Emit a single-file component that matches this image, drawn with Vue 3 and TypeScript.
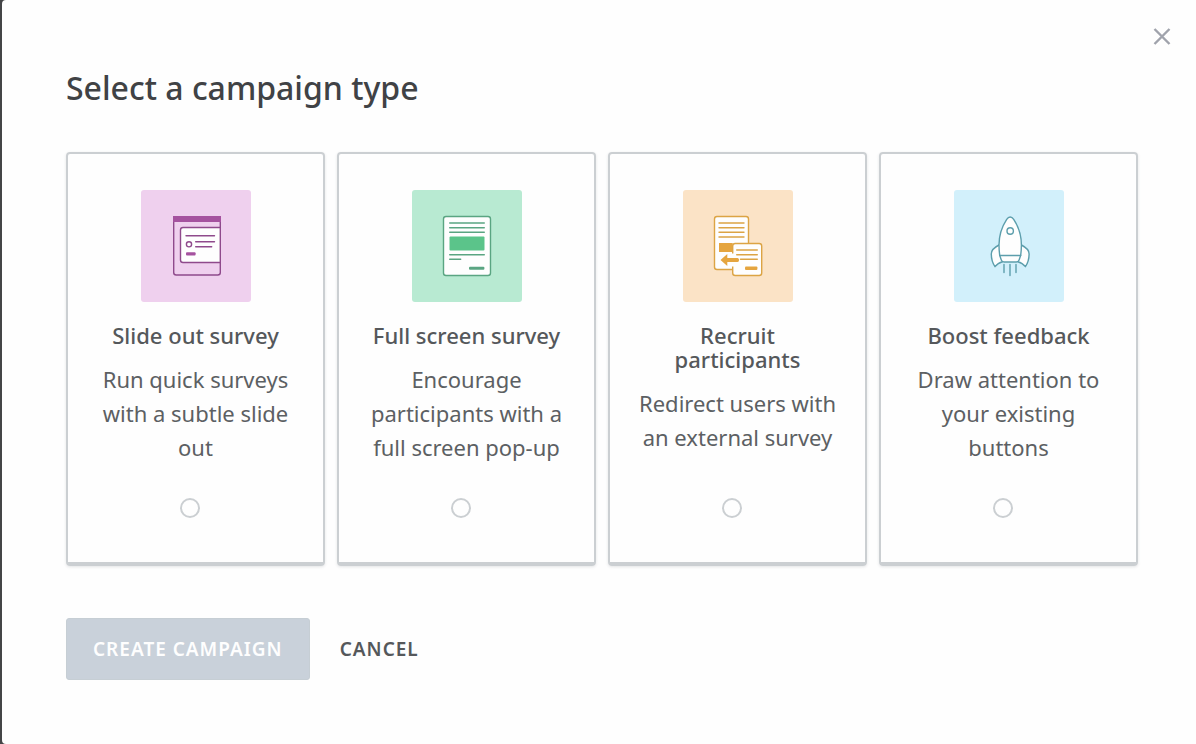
<script setup lang="ts">
import { ref } from 'vue'

interface Campaign {
  id: string
  title: string
  text: string
}

const campaigns: Campaign[] = [
  { id: 'slide', title: 'Slide out survey', text: 'Run quick surveys with a subtle slide out' },
  { id: 'full', title: 'Full screen survey', text: 'Encourage participants with a full screen pop-up' },
  { id: 'recruit', title: 'Recruit participants', text: 'Redirect users with an external survey' },
  { id: 'boost', title: 'Boost feedback', text: 'Draw attention to your existing buttons' },
]

const selected = ref('')
</script>

<template>
  <div class="backdrop">
    <main class="modal">
      <button class="close" type="button" aria-label="Close">
        <svg width="18" height="18" viewBox="0 0 18 18"><path d="M1.5 1l15 15M16.5 1l-15 15" /></svg>
      </button>
      <h1>Select a campaign type</h1>
      <form @submit.prevent>
        <div class="cards">
          <label v-for="c in campaigns" :key="c.id" class="card" :for="c.id">
            <span class="tile" :class="c.id">
              <svg v-if="c.id === 'slide'" viewBox="0 0 110 112">
                <path class="line" d="M32.7 30v52.5a2.5 2.5 0 0 0 2.5 2.5h41.6a2.5 2.5 0 0 0 2.5-2.5V30" />
                <path class="solid" d="M32 26h48v6H32z" />
                <path class="paper" d="M79.3 37.5H42a2.5 2.5 0 0 0-2.5 2.5v30a2.5 2.5 0 0 0 2.5 2.5h37.3z" />
                <path class="line" d="M45 45.7h28.5M54.7 51.8h18.8M54.7 56.7h16" />
                <circle class="line" cx="48" cy="54.3" r="2.6" />
                <rect class="solid" x="45" y="62.3" width="9.6" height="3.2" rx="1" />
              </svg>
              <svg v-else-if="c.id === 'full'" viewBox="0 0 110 112">
                <rect class="paper" x="31.5" y="26.5" width="47" height="59" rx="2.5" />
                <path class="line" d="M37.7 33h34.6M37.7 37.7h34.6M37.7 42.3h34.6M37.7 64.7h34.6M37.7 69.3h11" />
                <rect class="solid" x="37.5" y="46.5" width="35" height="14" rx="1" />
                <rect class="solid dark" x="57" y="76.7" width="15.4" height="3" rx="1" />
              </svg>
              <svg v-else-if="c.id === 'recruit'" viewBox="0 0 110 112">
                <rect class="paper" x="31.5" y="26.5" width="34" height="53" rx="2.5" />
                <path class="line" d="M36 33h25M36 37.7h25M36 42.3h25M36 47h25" />
                <path class="solid" d="M36 53h13.7v9H36z" />
                <rect class="paper" x="49.7" y="53.5" width="29" height="32" rx="2.5" />
                <path class="line" d="M53.7 60h20.6M53.7 64.7h20.6M57.5 69.3h16.8" />
                <path class="gap" d="M48 63.5h3.4v13H48z" />
                <path class="solid" d="M37.5 70l6.8-6v3.9h10.2c2 0 2 4 0 4H44.3V76z" />
                <rect class="solid" x="62" y="76.5" width="12.4" height="3.4" rx="1" />
              </svg>
              <svg v-else viewBox="0 0 110 112">
                <path class="paper" d="M45 55c-4 2-7.7 5-7.7 9 0 5 1.2 9 3.7 12.7 2-2.7 4.5-4.3 7.5-5M67.4 55c4 2 7.7 5 7.7 9 0 5-1.2 9-3.7 12.7-2-2.7-4.5-4.3-7.5-5" />
                <path class="paper" d="M56.2 27c-1.3 0-2.5.8-3.5 2.3-4.7 7.2-7.7 17-7.7 25.7 0 4 .2 7 .7 10.3L47.3 70a3 3 0 0 0 2.8 2h12.2a3 3 0 0 0 2.8-2l1.6-4.7c.5-3.3.7-6.3.7-10.3 0-8.7-3-18.5-7.7-25.7-1-1.5-2.2-2.3-3.5-2.3z" />
                <path class="line" d="M45.7 65.5h21M50 74.5v8M56 74.5v11M62 74.5v8" />
                <circle class="line" cx="56.2" cy="41" r="3.2" />
              </svg>
            </span>
            <span class="title">{{ c.title }}</span>
            <span class="text">{{ c.text }}</span>
            <input :id="c.id" v-model="selected" type="radio" name="campaign" :value="c.id" />
          </label>
        </div>
        <div class="actions">
          <button class="create" type="submit" :disabled="!selected">CREATE CAMPAIGN</button>
          <button class="cancel" type="button">CANCEL</button>
        </div>
      </form>
    </main>
  </div>
</template>

<style>
body {
  margin: 0;
  background: #444547;
}
</style>

<style scoped>
* {
  box-sizing: border-box;
}
.backdrop {
  padding-left: 2px;
  background: #444547;
  font-family: 'Noto Sans', 'Open Sans', sans-serif;
}
.modal {
  position: relative;
  min-height: 100vh;
  padding: 64px 58px 64px 64px;
  background: #fefefe;
  border-radius: 4px 0 0 4px;
}
button {
  border: 0;
  padding: 0;
  background: none;
  font: 600 19px/24px 'Noto Sans', 'Open Sans', sans-serif;
  letter-spacing: 1px;
  cursor: pointer;
}
.close {
  position: absolute;
  top: 28px;
  right: 25px;
  width: 18px;
  height: 18px;
}
.close svg {
  display: block;
  fill: none;
  stroke: #a0a3ac;
  stroke-width: 2.4;
}
h1 {
  margin: 0 0 40px;
  color: #404245;
  font-size: 32px;
  font-weight: 500;
  line-height: 48px;
}
.cards {
  display: grid;
  grid-template-columns: repeat(4, minmax(0, 1fr));
  gap: 12px;
}
.card {
  display: flex;
  flex-direction: column;
  align-items: center;
  min-height: 414px;
  padding: 36px 27px 44px;
  border: 2px solid #cbcfd2;
  border-bottom-width: 4px;
  border-radius: 4px;
  box-shadow: 0 1px 3px rgba(120, 130, 135, 0.2);
  text-align: center;
  cursor: pointer;
}
.tile {
  width: 110px;
  height: 112px;
  margin-bottom: 21px;
  border-radius: 3px;
}
.tile svg {
  display: block;
  width: 100%;
  height: 100%;
  stroke-width: 1.4;
  stroke-linecap: round;
  stroke-linejoin: round;
}
.slide { background: #efd0ee; color: #8f4a8c; --solid: #a5529f; }
.full { background: #b8ead2; color: #5aa582; --solid: #5bc48a; }
.recruit { background: #fbe3c6; color: #dca444; --solid: #e5a53f; }
.boost { background: #d2f0fb; color: #5c9eac; --solid: #5c9eac; }
.line { fill: none; stroke: currentColor; }
.paper { fill: #fefefe; stroke: currentColor; }
.solid { fill: var(--solid); }
.dark { fill: currentColor; }
.gap { fill: #fefefe; }
.title {
  margin-bottom: 15px;
  color: #55585b;
  font-size: 22px;
  font-weight: 500;
  line-height: 24px;
}
.text {
  color: #5c6063;
  font-size: 22px;
  line-height: 34px;
}
input {
  appearance: none;
  width: 20px;
  height: 20px;
  margin: auto 12px 0 0;
  border: 2px solid #cbcfd2;
  border-radius: 50%;
  background: #fefefe;
}
input:checked {
  border-width: 6px;
}
.actions {
  display: flex;
  gap: 30px;
  margin-top: 52px;
}
.create {
  padding: 18px 26px;
  border: 1px solid #c6ced4;
  border-radius: 3px;
  background: #c9d1da;
  color: #fefefe;
}
.cancel {
  color: #55585b;
}
</style>
